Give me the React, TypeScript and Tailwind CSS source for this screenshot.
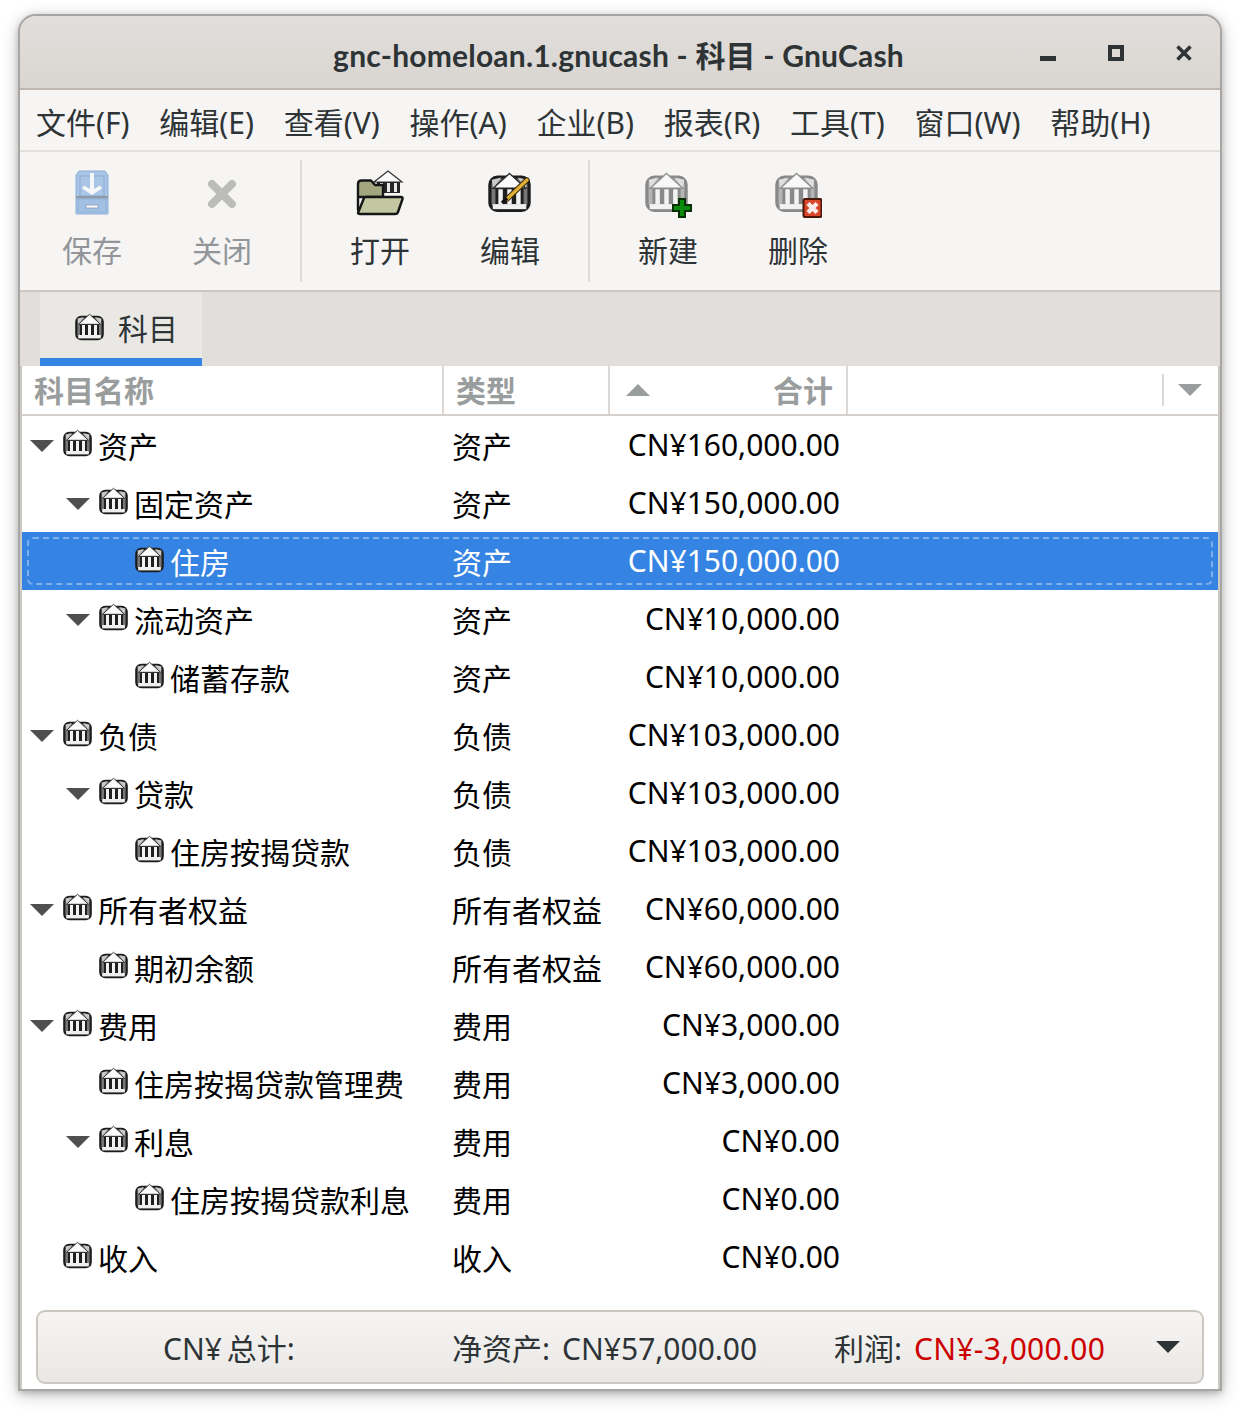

import React from "react";

function BankInner() {
  return (
    <>
      <rect x="1.3" y="3.3" width="26.4" height="22.4" rx="5" fill="#777777" stroke="#1c1c1c" strokeWidth="2.2" />
      <path d="M2.5 5 L9 3.5 L3.5 11Z" fill="#c9c9c9" />
      <path d="M26.5 5 L20 3.5 L25.5 11Z" fill="#c9c9c9" />
      <path d="M14.5 0.8 L25.5 10.8 H3.5 Z" fill="#fbfbfb" stroke="#2c2c2c" strokeWidth="0.9" />
      <rect x="5" y="11" width="19" height="10.5" fill="#1f1f1f" />
      <rect x="7" y="11.5" width="3" height="10" fill="#f2f2f2" />
      <rect x="13" y="11.5" width="3" height="10" fill="#f2f2f2" />
      <rect x="19" y="11.5" width="3" height="10" fill="#f2f2f2" />
      <rect x="3.2" y="21.5" width="22.6" height="3.4" fill="#efefef" />
    </>
  );
}

const Bank = ({ s = 29 }: { s?: number }) => (
  <svg width={s} height={s} viewBox="0 0 29 28" className="shrink-0 blur-[0.3px]">
    <BankInner />
  </svg>
);

const SaveIcon = () => (
  <svg width="48" height="48" viewBox="0 0 48 48" className="blur-[0.4px]">
    <path d="M8 5 L11 1 H37 L40 5 V44 H8 Z" fill="#a9c5e6" stroke="#8fb0d8" />
    <rect x="12" y="6" width="24" height="20" fill="none" stroke="#8dacd2" />
    <rect x="8" y="26" width="32" height="2.5" fill="#8f99a5" />
    <rect x="10" y="29" width="28" height="13" fill="#a2c0e3" stroke="#8fb0d8" />
    <rect x="18" y="35" width="12" height="3" fill="#f4f6f8" stroke="#7b8ea6" strokeWidth="0.6" />
    <path d="M22 3 H26 V19 L32 15.5 L34 18.5 L24 25 L14 18.5 L16 15.5 L22 19Z" fill="#f5f7f9" />
  </svg>
);

const CloseIcon = () => (
  <svg width="48" height="48" viewBox="0 0 48 48" className="blur-[0.4px]">
    <path d="M14 14 L34 34 M34 14 L14 34" stroke="#bcbcba" strokeWidth="8" strokeLinecap="round" />
  </svg>
);

const OpenIcon = () => (
  <svg width="48" height="48" viewBox="0 0 48 48" className="blur-[0.4px]">
    <g transform="translate(18 0)">
      <path d="M14 1 L28 12 H0 Z" fill="#fafafa" stroke="#333" strokeWidth="1.2" />
      <rect x="3" y="12" width="23" height="11" fill="#262626" />
      <rect x="6" y="13" width="3" height="9" fill="#e8e8e8" />
      <rect x="13" y="13" width="3" height="9" fill="#e8e8e8" />
      <rect x="20" y="13" width="3" height="9" fill="#e8e8e8" />
    </g>
    <path d="M2 40 V14 Q2 10.5 5.5 10.5 H15 L19 15 H27 V27 H2Z" fill="#a3a77f" stroke="#161616" strokeWidth="2.4" strokeLinejoin="round" />
    <path d="M2 43 L8 28 Q8.5 27 10 27 H45 Q47 27 46.5 29 L42 42 Q41.5 44 39 44 H4 Q2 44 2 43Z" fill="#c3c7a1" stroke="#161616" strokeWidth="2.4" strokeLinejoin="round" />
  </svg>
);

const EditIcon = () => (
  <svg width="48" height="48" viewBox="0 0 48 48" className="blur-[0.4px]">
    <svg x="2" y="2" width="43" height="42" viewBox="0 0 29 28"><BankInner /></svg>
    <path d="M21 29 L41 10" stroke="#3b2f10" strokeWidth="5.4" strokeLinecap="round" />
    <path d="M21 29 L41 10" stroke="#e2b036" strokeWidth="3.2" strokeLinecap="round" />
    <path d="M16 33 L21 28" stroke="#111" strokeWidth="3.4" />
  </svg>
);

const NewIcon = () => (
  <svg width="48" height="48" viewBox="0 0 48 48" className="blur-[0.3px]">
    <g opacity="0.5"><svg x="1" y="2" width="43" height="42" viewBox="0 0 29 28"><BankInner /></svg></g>
    <path d="M35 29 H41 V35 H47 V41 H41 V47 H35 V41 H29 V35 H35Z" fill="#0a8a0a" stroke="#053005" strokeWidth="2" />
  </svg>
);

const DeleteIcon = () => (
  <svg width="48" height="48" viewBox="0 0 48 48" className="blur-[0.3px]">
    <g opacity="0.5"><svg x="1" y="2" width="43" height="42" viewBox="0 0 29 28"><BankInner /></svg></g>
    <rect x="29.5" y="29" width="18" height="18" rx="1.5" fill="#d9472b" stroke="#4a1608" strokeWidth="2" />
    <path d="M34 33.5 L43 42.5 M43 33.5 L34 42.5" stroke="#f9ecea" strokeWidth="4.4" />
  </svg>
);

const tools = [
  [
    { label: "保存", icon: <SaveIcon />, off: true },
    { label: "关闭", icon: <CloseIcon />, off: true },
  ],
  [
    { label: "打开", icon: <OpenIcon />, off: false },
    { label: "编辑", icon: <EditIcon />, off: false },
  ],
  [
    { label: "新建", icon: <NewIcon />, off: false },
    { label: "删除", icon: <DeleteIcon />, off: false },
  ],
];

const menus = ["文件(F)", "编辑(E)", "查看(V)", "操作(A)", "企业(B)", "报表(R)", "工具(T)", "窗口(W)", "帮助(H)"];

type Row = { name: string; type: string; amt: string; depth: 0 | 1 | 2; arrow?: boolean; sel?: boolean };
const rows: Row[] = [
  { name: "资产", type: "资产", amt: "CN¥160,000.00", depth: 0, arrow: true },
  { name: "固定资产", type: "资产", amt: "CN¥150,000.00", depth: 1, arrow: true },
  { name: "住房", type: "资产", amt: "CN¥150,000.00", depth: 2, sel: true },
  { name: "流动资产", type: "资产", amt: "CN¥10,000.00", depth: 1, arrow: true },
  { name: "储蓄存款", type: "资产", amt: "CN¥10,000.00", depth: 2 },
  { name: "负债", type: "负债", amt: "CN¥103,000.00", depth: 0, arrow: true },
  { name: "贷款", type: "负债", amt: "CN¥103,000.00", depth: 1, arrow: true },
  { name: "住房按揭贷款", type: "负债", amt: "CN¥103,000.00", depth: 2 },
  { name: "所有者权益", type: "所有者权益", amt: "CN¥60,000.00", depth: 0, arrow: true },
  { name: "期初余额", type: "所有者权益", amt: "CN¥60,000.00", depth: 1 },
  { name: "费用", type: "费用", amt: "CN¥3,000.00", depth: 0, arrow: true },
  { name: "住房按揭贷款管理费", type: "费用", amt: "CN¥3,000.00", depth: 1 },
  { name: "利息", type: "费用", amt: "CN¥0.00", depth: 1, arrow: true },
  { name: "住房按揭贷款利息", type: "费用", amt: "CN¥0.00", depth: 2 },
  { name: "收入", type: "收入", amt: "CN¥0.00", depth: 0 },
];

const indent = ["pl-[9px]", "pl-[45px]", "pl-[81px]"];

const Tri = ({ w = 24, h = 12, color = "#555753" }: { w?: number; h?: number; color?: string }) => (
  <svg width={w} height={h} viewBox="0 0 24 12" className="shrink-0">
    <path d="M0 0 H24 L12 12Z" fill={color} />
  </svg>
);

export default function App() {
  return (
    <div className="w-[1240px] h-[1410px] bg-white overflow-hidden pt-[14px] pl-[18px] text-[30px] leading-none text-[#2e3436] font-['Noto_Sans','Noto_Sans_CJK_SC',sans-serif]">
      <div className="w-[1204px] h-[1377px] flex flex-col border-2 border-[#a6a6a4] rounded-t-[18px] bg-[#f6f5f4] overflow-hidden shadow-[0_2px_6px_rgba(0,0,0,0.2),0_4px_18px_rgba(0,0,0,0.22)]">
        {/* title bar */}
        <div className="relative h-[74px] shrink-0 flex items-center justify-center border-b-2 border-[#bdb7b0] bg-gradient-to-b from-[#e1dedb] to-[#d9d6d2]">
          <span className="font-bold text-[30px] tracking-[0.2px] text-[#2e3436] ml-[-3px] mt-[5px] font-['Lato','Noto_Sans_CJK_SC',sans-serif] whitespace-nowrap">gnc-homeloan.1.gnucash - 科目 - GnuCash</span>
          <div className="absolute left-[1019px] top-[28px] flex items-start">
            <svg width="18" height="18" viewBox="0 0 18 18">
              <rect x="1" y="12" width="16" height="5" fill="#2e3436" />
            </svg>
            <svg width="18" height="18" viewBox="0 0 18 18" className="ml-[50px]">
              <rect x="3" y="3" width="12" height="12" fill="none" stroke="#2e3436" strokeWidth="4" />
            </svg>
            <svg width="18" height="18" viewBox="0 0 18 18" className="ml-[50px]">
              <path d="M2.5 2.5 L15.5 15.5 M15.5 2.5 L2.5 15.5" stroke="#2e3436" strokeWidth="3.6" />
            </svg>
          </div>
        </div>

        {/* menu */}
        <div className="h-[62px] shrink-0 flex items-center gap-[29.75px] pl-[16px] pt-[6px] border-b-2 border-[#e3e0dd]">
          {menus.map((m) => (
            <span key={m} className="whitespace-nowrap">{m}</span>
          ))}
        </div>

        {/* toolbar */}
        <div className="h-[140px] shrink-0 flex items-start pl-[7px] border-b-2 border-[#cdc7c2]">
          {tools.map((group, gi) => (
            <React.Fragment key={gi}>
              {gi > 0 && <div className="w-[2px] h-[122px] mt-[8px] mx-[13px] bg-[#dedbd8]" />}
              {group.map((t) => (
                <div key={t.label} className="w-[130px] flex flex-col items-center pt-[18px]">
                  <div className="w-[48px] h-[48px]">{t.icon}</div>
                  <span className={"mt-[18px] " + (t.off ? "text-[#92959a]" : "text-[#2e3436]")}>{t.label}</span>
                </div>
              ))}
            </React.Fragment>
          ))}
        </div>

        {/* tabs */}
        <div className="h-[74px] shrink-0 flex pl-[20px] bg-[#e1dedb]">
          <div className="w-[162px] h-full flex items-center pl-[35px] gap-[14px] bg-[#eae8e5] border-b-[8px] border-[#3584e4]">
            <div className="mt-[4px]"><Bank /></div>
            <span className="mt-[8px]">科目</span>
          </div>
        </div>

        {/* table */}
        <div className="flex-1 flex flex-col min-h-0 bg-white border-x-2 border-[#cdc7c2]">
          <div className="h-[50px] shrink-0 flex border-b-2 border-[#d5d0cc] font-bold text-[#9a9d9d]">
            <div className="w-[422px] h-full flex items-center pl-[12px] border-r-2 border-[#dcd8d5]"><span className="mt-[2px]">科目名称</span></div>
            <div className="w-[166px] h-full flex items-center pl-[12px] border-r-2 border-[#dcd8d5]"><span className="mt-[2px]">类型</span></div>
            <div className="w-[238px] h-full flex items-center justify-between pl-[16px] pr-[13px] border-r-2 border-[#dcd8d5]">
              <svg width="24" height="12" viewBox="0 0 24 12"><path d="M0 12 H24 L12 0Z" fill="#9a9d9d" /></svg>
              <span className="mt-[2px]">合计</span>
            </div>
            <div className="flex-1 flex justify-end items-center h-full pr-[16px]">
              <div className="w-[2px] h-[32px] mr-[14px] bg-[#dcd8d5]" />
              <Tri color="#9a9d9d" />
            </div>
          </div>
          <div className="shrink-0">
            {rows.map((r) => (
              <div key={r.name + r.amt} className={"relative h-[58px] flex items-center " + (r.sel ? "bg-[#3584e4] text-white" : "text-black")}>
                {r.sel && <div className="absolute inset-[5px] border-2 border-dashed border-[#7fb0ec] rounded-[6px]" />}
                <div className={"w-[422px] flex items-center whitespace-nowrap " + indent[r.depth]}>
                  <div className="w-[32px] shrink-0 mt-[2px] ml-[-1px] mr-[1px]">{r.arrow && <Tri color="#4f4f4f" />}</div>
                  <div className="mt-[-4px] w-[29px] shrink-0"><Bank /></div>
                  <span className="ml-[6px] mt-[4px]">{r.name}</span>
                </div>
                <div className="w-[166px] pl-[8px] whitespace-nowrap mt-[4px]">{r.type}</div>
                <div className="w-[230px] text-right whitespace-nowrap">{r.amt}</div>
              </div>
            ))}
          </div>
        </div>

        {/* summary */}
        <div className="bg-white border-x-2 border-[#cdc7c2] h-[103px] shrink-0 pt-[24px] px-[14px]">
          <div className="h-[74px] flex items-center pl-[125px] pr-[22px] pt-[4px] rounded-[9px] border-2 border-[#cdc7c2] bg-gradient-to-b from-[#f6f5f4] to-[#eae8e5] whitespace-nowrap">
            <span className="w-[289px] [word-spacing:-3px]">CN¥ 总计:</span>
            <span className="w-[382px]">净资产:<span className="ml-[12px]">CN¥57,000.00</span></span>
            <span>利润:</span>
            <span className="ml-[12px] tracking-[0.3px] text-[#cc0000]">CN¥-3,000.00</span>
            <div className="ml-auto mt-[-5px]"><Tri color="#2e3436" /></div>
          </div>
        </div>
      </div>
    </div>
  );
}
